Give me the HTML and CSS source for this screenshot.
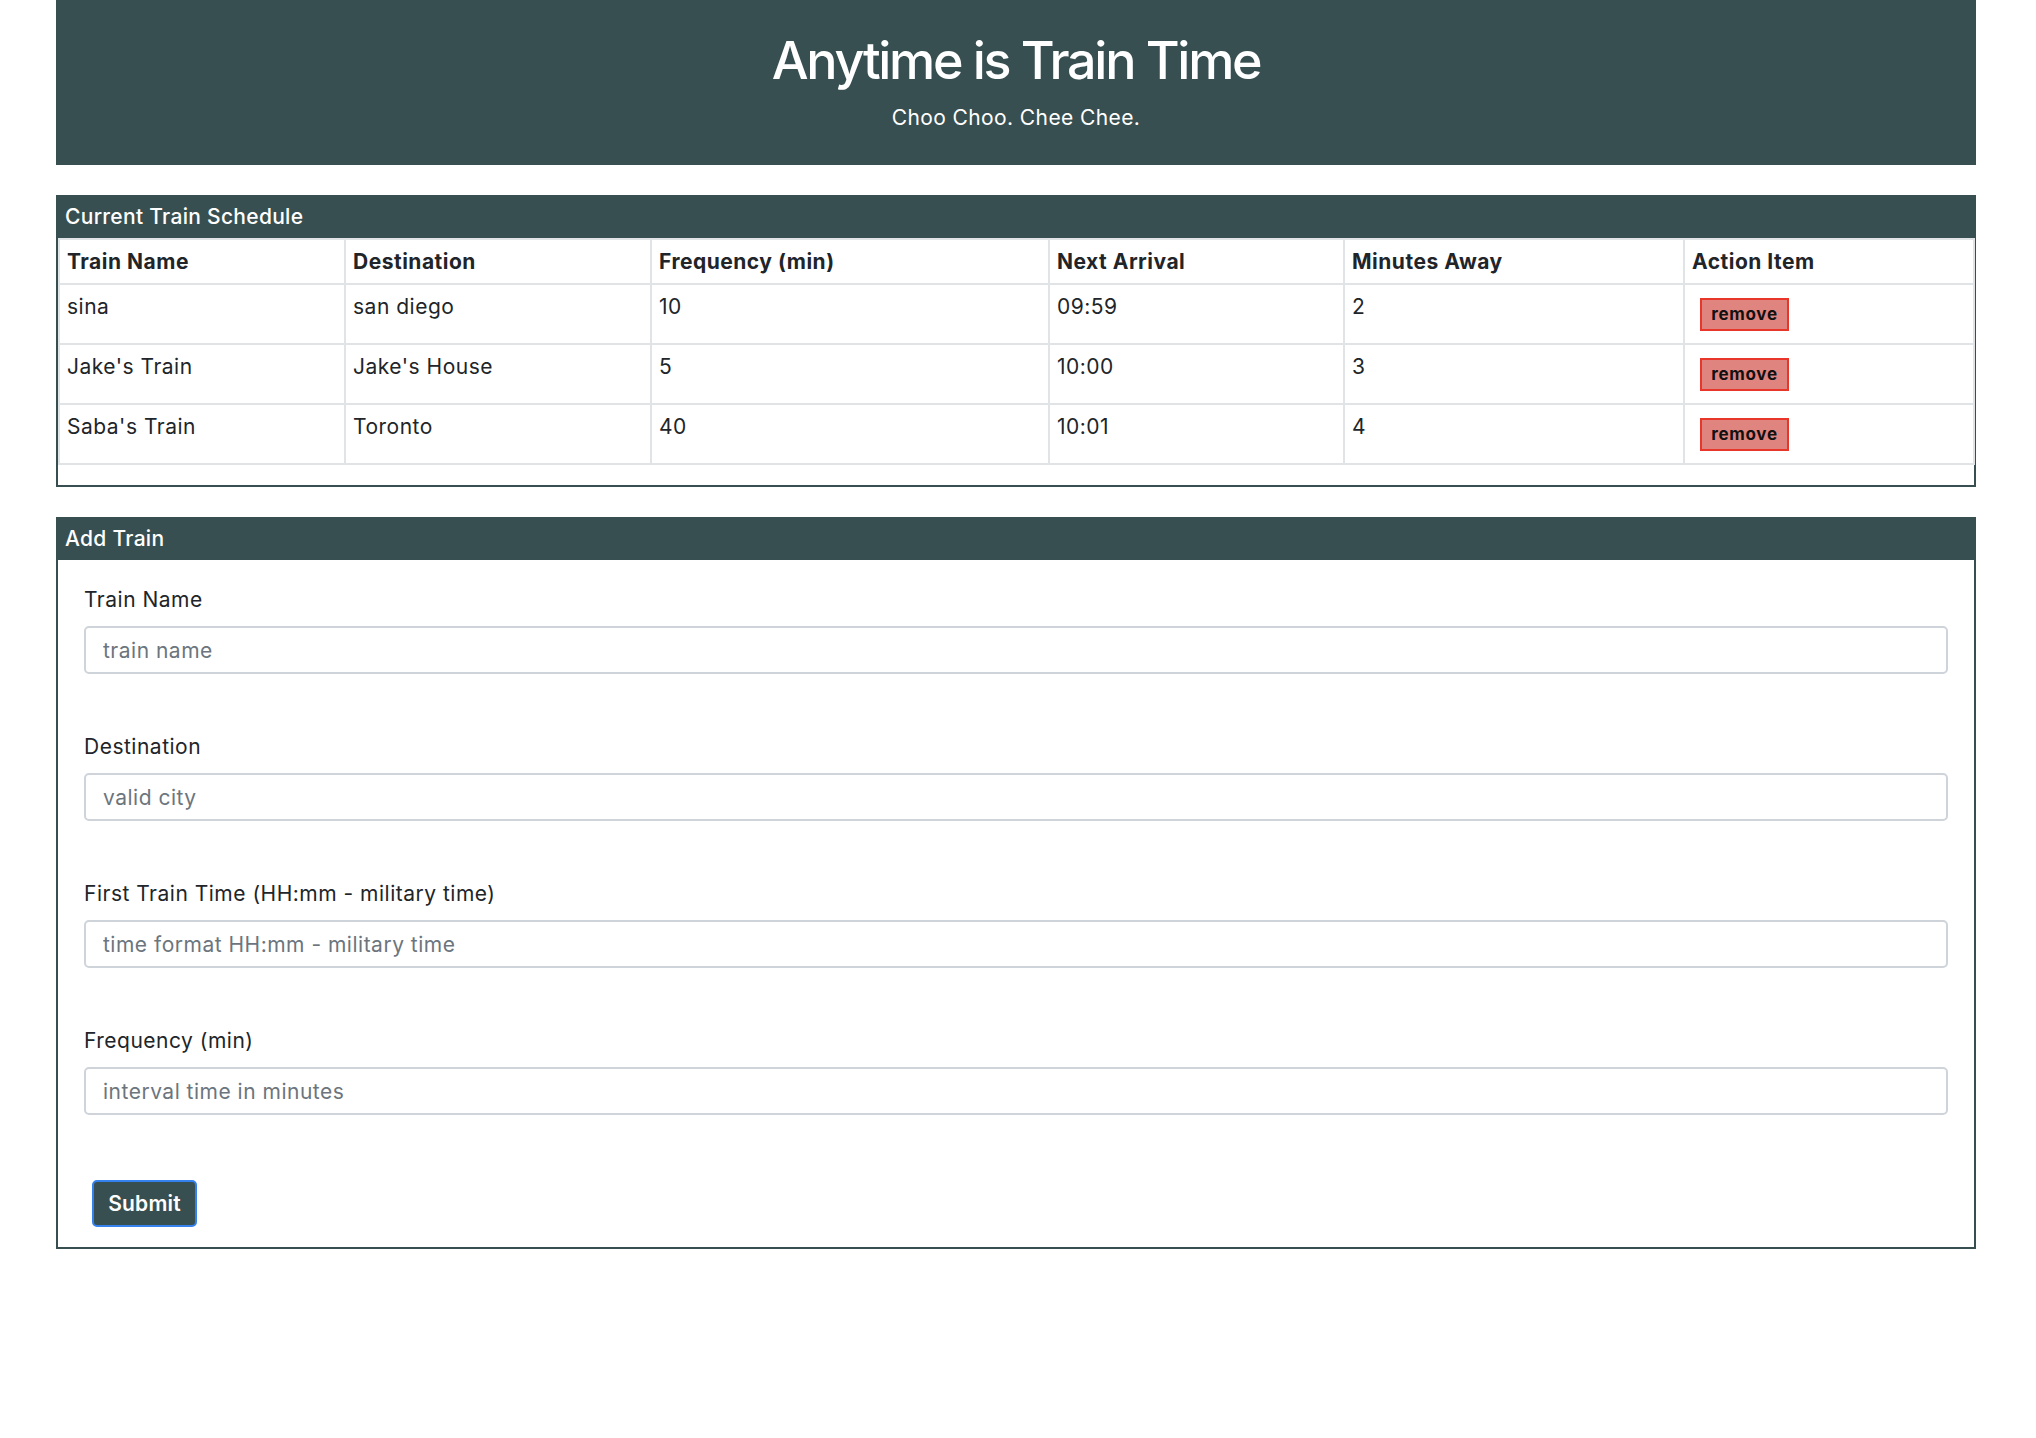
FILE: index.html
```html
<!DOCTYPE html>
<html lang="en">
<head>
<meta charset="utf-8">
<title>Anytime is Train Time</title>
<link rel="stylesheet" href="styles.css">
</head>
<body>
<div class="page">
  <header class="hero">
    <h1 class="hero-title">Anytime is Train Time</h1>
    <p class="hero-sub">Choo Choo. Chee Chee.</p>
  </header>

  <section class="card">
    <div class="card-header">Current Train Schedule</div>
    <table class="schedule">
      <thead>
        <tr>
          <th class="c-name">Train Name</th>
          <th class="c-dest">Destination</th>
          <th class="c-freq">Frequency (min)</th>
          <th class="c-next">Next Arrival</th>
          <th class="c-away">Minutes Away</th>
          <th class="c-act">Action Item</th>
        </tr>
      </thead>
      <tbody>
        <tr>
          <td>sina</td>
          <td>san diego</td>
          <td>10</td>
          <td>09:59</td>
          <td>2</td>
          <td><button class="remove" type="button">remove</button></td>
        </tr>
        <tr>
          <td>Jake's Train</td>
          <td>Jake's House</td>
          <td>5</td>
          <td>10:00</td>
          <td>3</td>
          <td><button class="remove" type="button">remove</button></td>
        </tr>
        <tr>
          <td>Saba's Train</td>
          <td>Toronto</td>
          <td>40</td>
          <td>10:01</td>
          <td>4</td>
          <td><button class="remove" type="button">remove</button></td>
        </tr>
      </tbody>
    </table>
  </section>

  <section class="card">
    <div class="card-header">Add Train</div>
    <form class="card-body">
      <div class="field">
        <label class="field-label" for="name">Train Name</label>
        <input class="field-input" id="name" type="text" placeholder="train name">
      </div>
      <div class="field">
        <label class="field-label" for="dest">Destination</label>
        <input class="field-input" id="dest" type="text" placeholder="valid city">
      </div>
      <div class="field">
        <label class="field-label" for="first">First Train Time (HH:mm - military time)</label>
        <input class="field-input" id="first" type="text" placeholder="time format HH:mm - military time">
      </div>
      <div class="field">
        <label class="field-label" for="freq">Frequency (min)</label>
        <input class="field-input" id="freq" type="text" placeholder="interval time in minutes">
      </div>
      <button class="submit" type="button">Submit</button>
    </form>
  </section>
</div>
</body>
</html>
```

FILE: styles.css
```css
* {
  box-sizing: border-box;
}

body {
  margin: 0;
  background: #ffffff;
  color: #212529;
  font-family: Inter, "Liberation Sans", sans-serif;
  font-size: 21px;
  line-height: 31px;
  letter-spacing: 0.5px;
}

.page {
  width: 1920px;
  margin-left: 56px;
}

.hero {
  height: 165px;
  padding-top: 30px;
  background: #384f51;
  color: #ffffff;
  text-align: center;
}

.hero-title {
  margin: 0 0 10px;
  font-size: 52px;
  line-height: 62px;
  font-weight: 500;
  letter-spacing: -2.3px;
}

.hero-sub {
  margin: 0;
  font-size: 21px;
  line-height: 31px;
  letter-spacing: 0.4px;
}

.card {
  margin-top: 30px;
  border: 2px solid #384f51;
  background: #ffffff;
}

.card-header {
  padding: 4px 7px 6px;
  background: #384f51;
  color: #ffffff;
  font-size: 21px;
  line-height: 31px;
  font-weight: 500;
  letter-spacing: 0.3px;
}

.schedule {
  width: 100%;
  margin-bottom: 20px;
  border-collapse: collapse;
  table-layout: fixed;
  border: 2px solid #e1e4e7;
}

.schedule th,
.schedule td {
  padding: 6px 7px;
  border: 2px solid #e1e4e7;
  text-align: left;
  vertical-align: top;
  font-size: 21px;
  line-height: 31px;
}

.schedule th {
  font-weight: 700;
}

.c-name { width: 286px; }
.c-dest { width: 306px; }
.c-freq { width: 398px; }
.c-next { width: 295px; }
.c-away { width: 340px; }
.c-act  { width: 290px; }

.remove {
  display: block;
  width: 89px;
  height: 33px;
  margin: 7px 8px 6px;
  padding: 0;
  background: #e08480;
  border: 2px solid #e8372a;
  border-radius: 0;
  color: #111111;
  font-family: Inter, "Liberation Sans", sans-serif;
  font-size: 17px;
  font-weight: 700;
  line-height: 29px;
  letter-spacing: 0.7px;
}

.card-body {
  display: flex;
  flex-direction: column;
  align-items: stretch;
  padding: 24px 26px 20px;
}

.field {
  margin-bottom: 57px;
}

.field-label {
  display: block;
  margin-bottom: 11px;
  font-size: 21px;
  line-height: 31px;
  color: #212529;
}

.field-input {
  display: block;
  width: 100%;
  height: 48px;
  padding: 0 17px;
  border: 2px solid #ced4da;
  border-radius: 5px;
  background: #ffffff;
  color: #495057;
  font-family: Inter, "Liberation Sans", sans-serif;
  font-size: 21px;
  letter-spacing: 0.5px;
}

.field-input::placeholder {
  color: #6c757d;
}

.submit {
  align-self: flex-start;
  width: 105px;
  height: 47px;
  margin: 8px 0 0 8px;
  padding: 0;
  background: #384f51;
  border: 2px solid #3482ee;
  border-radius: 5px;
  color: #ffffff;
  font-family: Inter, "Liberation Sans", sans-serif;
  font-size: 21px;
  font-weight: 600;
  line-height: 43px;
  letter-spacing: 0.2px;
}
```
